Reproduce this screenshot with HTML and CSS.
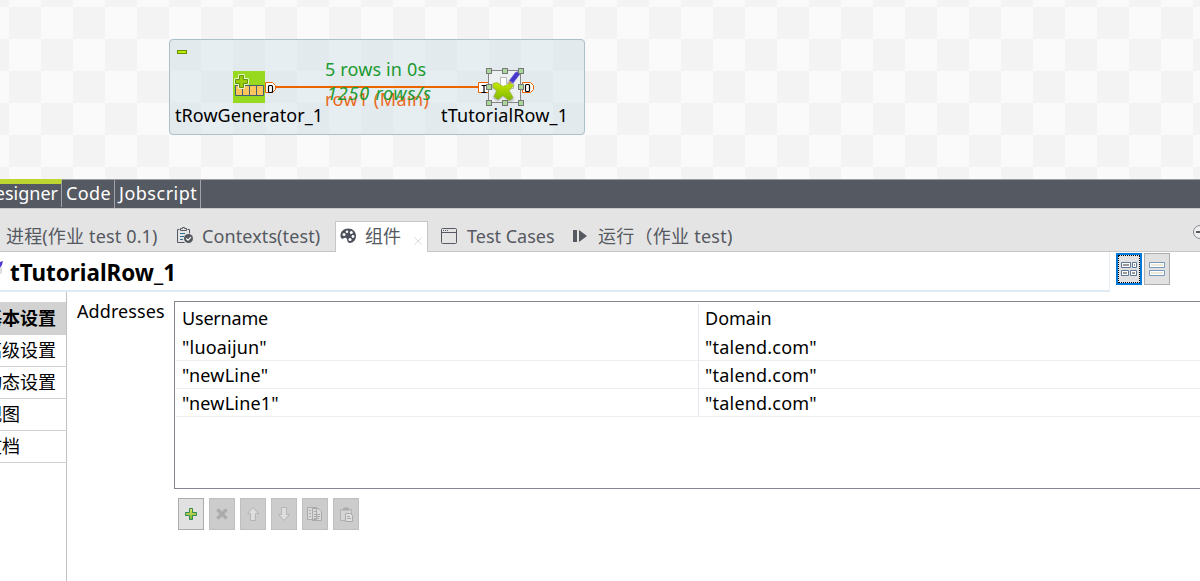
FILE: index.html
```html
<!DOCTYPE html>
<html lang="zh">
<head>
<meta charset="utf-8">
<title>tTutorialRow_1</title>
<link rel="stylesheet" href="styles.css">
</head>
<body>
<main class="app">
  <section class="canvas">
    <svg class="job" width="1200" height="179" viewBox="0 0 1200 179">
      <defs>
        <linearGradient id="leaf" x1="0" y1="0" x2="0" y2="1"><stop offset="0" stop-color="#c5e600"/><stop offset="1" stop-color="#7fb700"/></linearGradient>
        <filter id="soft" x="-30%" y="-30%" width="160%" height="160%"><feGaussianBlur stdDeviation="1"/></filter>
      </defs>
      <rect x="169.500" y="39.500" width="415" height="95" rx="3.500" fill="#d2e1e9" fill-opacity=".5" stroke="#abc0cb"/>
      <rect x="177.500" y="50.500" width="9" height="3" fill="#b4f000" stroke="#6e8c00"/>
      <path d="M276 87h203" stroke="#ea6500" stroke-width="2"/>
      <g class="label">
        <text x="325" y="106" textLength="104" fill="#ea6a1e">row1 (Main)</text>
        <text x="325" y="76" textLength="101" fill="#209a30">5 rows in 0s</text>
        <text x="327" y="100" textLength="104" font-style="italic" fill="#209a30">1250 rows/s</text>
        <text x="175" y="122" textLength="148">tRowGenerator_1</text>
        <text x="441" y="122" textLength="127">tTutorialRow_1</text>
      </g>
      <rect x="233" y="71" width="32" height="32" fill="#97d91e"/>
      <path d="M235.500 85.500h28v10h-28zM242.500 85.500v10M249.500 85.500v10M256.500 85.500v10" fill="#ffc55d" stroke="#426073"/>
      <path d="M239.500 75.500h4v4h4v4h-4v4h-4v-4h-4v-4h4z" fill="#8bc400" stroke="#e5f6c8" stroke-width="3" stroke-linejoin="round"/>
      <path d="M239.500 75.500h4v4h4v4h-4v4h-4v-4h-4v-4h4z" fill="#99cc0b" stroke="#659409"/>
      <g fill="#fff" stroke="#ea6500">
        <path d="M265.500 82.500h7l3 3v4l-3 3h-7z"/>
        <path d="M478.500 82.500h10v10h-10z"/>
        <path d="M522.500 82.500h8l3 3v4l-3 3h-8z"/>
      </g>
      <g fill="none" stroke="#000" stroke-width="1.200">
        <rect x="268.500" y="85.500" width="4" height="7" rx="1"/>
        <path d="M481.500 85.500h5M484 85.500v7M481.500 92.500h5"/>
        <rect x="525.500" y="84.500" width="4" height="7" rx="1"/>
      </g>
      <rect x="489" y="71" width="32" height="32" fill="#ecf0f1"/>
      <path d="M494 84l8 2 8-5 4 3-6 6 6 9-4 3-7-6-5 5-5-3 4-8-6-2z" fill="#777" opacity=".6" filter="url(#soft)"/>
      <path d="M500.500 77.500h6v6h7v5h-13z" fill="#fff" stroke="#aaa" stroke-width=".8"/>
      <path d="M493 83.500l4-1 6 4 7-3 4 2-5 5 4 7-4 3-6-5-5 4-4-3 3-6-4-3z" fill="url(#leaf)" stroke="#91ad20" stroke-width=".6"/>
      <path d="M508.500 84l1.500-5 3 3z" fill="#d49a3a"/>
      <path d="M509.500 80.500l6-8 3.500-1 .5 3-6.500 8.500z" fill="#4438ca" stroke="#6a5ee0" stroke-width=".9"/>
      <rect x="488.500" y="70.500" width="32" height="32" fill="none" stroke="#858585"/>
      <g fill="#a9d799" stroke="#777">
        <rect x="486.500" y="68.500" width="5" height="5"/><rect x="502.500" y="68.500" width="5" height="5"/><rect x="518.500" y="68.500" width="5" height="5"/>
        <rect x="486.500" y="84.500" width="5" height="5"/><rect x="518.500" y="84.500" width="5" height="5"/>
        <rect x="486.500" y="100.500" width="5" height="5"/><rect x="502.500" y="100.500" width="5" height="5"/><rect x="518.500" y="100.500" width="5" height="5"/>
      </g>
    </svg>
  </section>

  <nav class="modes">
    <span class="mode mode-active"><span class="t-designer">Designer</span></span>
    <span class="mode mode-code">Code</span>
    <span class="mode mode-script">Jobscript</span>
  </nav>

  <nav class="tabs">
    <div class="tab tab-job"><span>进程(作业 test 0.1)</span></div>
    <div class="tab tab-context">
      <svg width="18" height="18" viewBox="0 0 18 18"><path d="M3.500 2.500h-2v13h7M11.500 2.500h2v4M4.500 3.500v-2h2v-1h2v1h2v2z" fill="none" stroke="#555962"/><path d="M4 6.500h5M4 9.500h4M4 12.500h3" stroke="#2f7095"/><circle cx="12.500" cy="11.500" r="4.500" fill="#555962"/><path d="M10.300 11.500l1.700 1.700 3-3" stroke="#fff" fill="none" stroke-width="1.200"/></svg>
      <span>Contexts(test)</span>
    </div>
    <div class="tab tab-active">
      <svg width="16" height="16" viewBox="0 0 16 16"><path d="M1 10C-1 5 3 .5 8 .5S16 4 16 8s-3 7-6 7c-3.500 0-2-4-4-5s-3 2-5 0z" fill="#4c505b"/><g fill="#fff"><circle cx="4" cy="6.500" r="1.500"/><circle cx="7" cy="3.700" r="1.300"/><circle cx="11.300" cy="4.500" r="1.500"/><circle cx="13" cy="8.500" r="1.400"/><circle cx="10" cy="11.500" r="1.500"/></g></svg>
      <span class="t-component">组件</span>
      <svg class="close" width="8" height="8" viewBox="0 0 8 8"><path d="M.5.500l7 7M7.500.500l-7 7" stroke="#d9d9d9"/></svg>
    </div>
    <div class="tab tab-cases">
      <svg width="16" height="16" viewBox="0 0 16 16"><rect x=".5" y=".5" width="15" height="15" rx="1" fill="none" stroke="#555962"/><path d="M1 4.500h14" stroke="#555962"/><path d="M2 2.500h5" stroke="#555962" stroke-dasharray="1 1"/></svg>
      <span>Test Cases</span>
    </div>
    <div class="tab tab-run">
      <svg width="14" height="12" viewBox="0 0 14 12"><path d="M0 0h4v12H0zM6 0l8 6-8 6z" fill="#555962"/></svg>
      <span>运行（作业 test)</span>
    </div>
    <svg class="minimize" width="7" height="14" viewBox="0 0 7 14"><circle cx="7" cy="7" r="6.500" fill="#eee" stroke="#888b93"/><path d="M3 7h4" stroke="#555962" stroke-width="2"/></svg>
  </nav>

  <header class="head">
    <div class="title">
      <svg width="4" height="36" viewBox="0 0 4 36"><path d="M0 10l3-1-1 4-2 3z" fill="#4c3bd0"/><path d="M0 16l2-1v6l-2 1z" fill="#ddd"/></svg>
      <h1>tTutorialRow_1</h1>
    </div>
    <div class="views">
      <button class="view view-on"><svg width="16" height="14" viewBox="0 0 16 14"><g fill="#fff" stroke="#5d7896"><path d="M.5.500h9v5h-9zM11.500.500h4v5h-4zM.5 8.500h7v5h-7zM9.500 8.500h6v5h-6z"/></g><path d="M2 2h6v2H2zM13 2h1v2h-1zM2 10h4v2H2zM11 10h3v2h-3z" fill="#999"/></svg></button>
      <button class="view"><svg width="16" height="14" viewBox="0 0 16 14"><path d="M.5.500h15v5H.5zM.5 8.500h15v5H.5z" fill="#fff" stroke="#7898bd"/><path d="M2 2h12v2H2zM2 10h12v2H2z" fill="#ece9d8"/></svg></button>
    </div>
  </header>

  <section class="body">
    <aside class="side">
      <div class="item item-on"><span>基本设置</span></div>
      <div class="item"><span>高级设置</span></div>
      <div class="item"><span>动态设置</span></div>
      <div class="item"><span>视图</span></div>
      <div class="item"><span>文档</span></div>
    </aside>
    <div class="field">Addresses</div>
    <div class="editor">
      <div class="table">
        <div class="row row-head"><span class="cell">Username</span><span class="cell">Domain</span></div>
        <div class="row"><span class="cell">"luoaijun"</span><span class="cell">"talend.com"</span></div>
        <div class="row"><span class="cell">"newLine"</span><span class="cell">"talend.com"</span></div>
        <div class="row"><span class="cell">"newLine1"</span><span class="cell">"talend.com"</span></div>
      </div>
      <div class="tools">
        <button class="tool tool-on"><svg width="16" height="16" viewBox="0 0 16 16"><defs><linearGradient id="add" x1="0" y1="0" x2="0" y2="1"><stop offset="0" stop-color="#e6e763"/><stop offset="1" stop-color="#79b42c"/></linearGradient></defs><path d="M6.500 2.500h3v4h4v3h-4v4h-3v-4h-4v-3h4z" fill="url(#add)" stroke="#338858"/></svg></button>
        <button class="tool"><svg width="16" height="16" viewBox="0 0 16 16"><path d="M2.500 4.500l2-2 3.500 3 3.500-3 2 2-3 3.500 3 3.500-2 2-3.500-3-3.500 3-2-2 3-3.500z" fill="#aaa" stroke="#b9b9b9"/></svg></button>
        <button class="tool"><svg width="16" height="16" viewBox="0 0 16 16"><path d="M8 1.500l5.500 6h-3v7h-5v-7h-3z" fill="#dedede" stroke="#b5b5b5"/></svg></button>
        <button class="tool"><svg width="16" height="16" viewBox="0 0 16 16"><path d="M8 14.500l5.500-6h-3v-7h-5v7h-3z" fill="#dedede" stroke="#b5b5b5"/></svg></button>
        <button class="tool"><svg width="16" height="16" viewBox="0 0 16 16"><path d="M.5 1.500h9v12h-9zM5.500 2.500h6l3 3v9h-9z" fill="#d9d9d9" stroke="#aaa"/><path d="M2 4.500h2M2 7.500h2M2 10.500h2M7 5.500h3M7 8.500h6M7 10.500h6M7 12.500h5" stroke="#aaa"/></svg></button>
        <button class="tool"><svg width="16" height="16" viewBox="0 0 16 16"><path d="M2.500 3.500h11v11h-11z" fill="#d4d4d4" stroke="#b2b2b2"/><path d="M4 4.500l2-3h4l2 3z" fill="#aaa"/><path d="M7.500 7.500h5l2 2v6h-7z" fill="#dedede" stroke="#aaa"/><path d="M9 10.500h3M9 12.500h4" stroke="#aaa"/></svg></button>
      </div>
    </div>
  </section>
</main>
</body>
</html>
```
FILE: styles.css
```css
* { box-sizing: border-box; }
body {
  margin: 0;
  font: 18px/24px "Noto Sans", "Noto Sans CJK SC", sans-serif;
  color: #000;
  background: #fff;
}
svg { display: block; flex: none; }
.app { width: 1200px; height: 581px; overflow: hidden; display: flex; flex-direction: column; }
.canvas {
  height: 179px;
  flex: none;
  background: conic-gradient(#fafafa 25%, #f3f3f3 0 50%, #fafafa 0 75%, #f3f3f3 0) 9px 7px / 64px 64px;
}
.label { font-size: 18px; }

.modes {
  flex: none;
  display: flex;
  height: 30px;
  border-top: 1px solid #9d9d9f;
  border-bottom: 1px solid #c9c9cc;
  background: #555962;
  color: #fff;
}
.mode { height: 28px; border-right: 1px solid #a1a3a8; line-height: 26px; white-space: nowrap; }
.mode-active {
  width: 62px;
  height: 28px;
  margin-top: -1px;
  border-top: 5px solid #bed730;
  padding-right: 3px;
  display: flex;
  justify-content: flex-end;
  line-height: 18px;
}
.mode-code { width: 53px; padding-left: 4px; letter-spacing: .4px; }
.mode-script { width: 86px; padding-left: 4px; letter-spacing: .5px; }

.tabs {
  flex: none;
  display: flex;
  align-items: flex-end;
  height: 43px;
  background: #e4e4e4;
  border-bottom: 1px solid #c6c6c6;
  color: #555962;
}
.tab { height: 30px; display: flex; align-items: center; white-space: nowrap; }
.tab-job { width: 176px; padding-left: 6px; letter-spacing: .15px; }
.tab-context { width: 159px; gap: 8px; letter-spacing: .1px; }
.tab-active {
  width: 93px;
  height: 31px;
  margin-bottom: -1px;
  padding: 0 6px 2px 4px;
  gap: 9px;
  background: #fff;
  border: 1px solid #c6c6c6;
  border-bottom: 0;
}
.close { margin: 10px 0 0 4px; }
.tab-cases { width: 145px; padding-left: 13px; gap: 10px; }
.tab-run { gap: 11px; letter-spacing: .25px; }
.minimize { margin: 0 0 12px auto; }

.head { flex: none; display: flex; height: 40px; }
.title {
  display: flex;
  width: 1110px;
  height: 40px;
  border-right: 1px solid #e6eef5;
  border-bottom: 2px solid #dfe9f1;
}
h1 { margin: 0 0 0 6px; font-size: 22.4px; line-height: 41px; font-weight: 700; }
.views { display: flex; gap: 2px; padding: 1px 0 0 6px; }
.view, .tool {
  width: 26px;
  height: 32px;
  padding: 0;
  display: flex;
  align-items: center;
  justify-content: center;
  border: 1px solid #adadad;
  background: #e1e1e1;
}
.view-on { border: 2px solid #0078d7; outline: 1px dotted #000; outline-offset: -3px; }

.body { flex: 1; display: flex; min-height: 0; }
.side { width: 67px; padding-top: 10px; border-right: 1px solid #c0c0c0; overflow: hidden; }
.item { height: 32px; line-height: 31px; border-bottom: 1px solid #d0d0d0; white-space: nowrap; }
.item:first-child { height: 33px; line-height: 33px; }
.item span { margin-left: -16px; }
.item-on { background: #d2d2d2; font-weight: 700; }
.field { width: 107px; padding: 7px 0 0 10px; letter-spacing: .1px; }
.editor { flex: 1; padding-top: 9px; }
.table { height: 188px; border: 1px solid #828790; border-right: 0; padding: 2px 0 0 1px; }
.row { display: flex; height: 28px; border-bottom: 1px solid #ededed; line-height: 28px; letter-spacing: .2px; }
.row-head { height: 29px; border-bottom: 0; letter-spacing: 0; }
.row-head .cell:first-child { letter-spacing: -.2px; }
.cell { padding-left: 6px; }
.cell:first-child { width: 523px; border-right: 1px solid #e2e7ef; }
.tools { display: flex; gap: 5px; padding: 9px 0 0 4px; }
.tool { background: #ccc; border-color: #bfbfbf; }
.tool-on { background: #e1e1e1; border-color: #adadad; }
```
